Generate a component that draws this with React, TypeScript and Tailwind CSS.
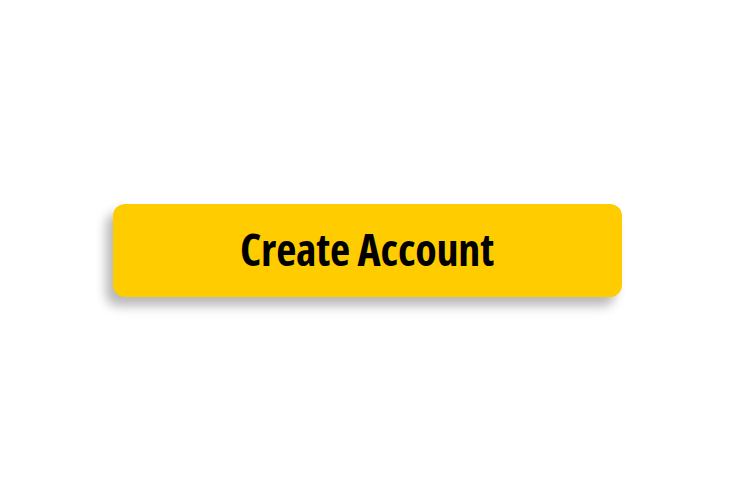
export default function App() {
  return (
    <div className="flex h-[500px] w-full items-center justify-center bg-white">
      <button
        type="button"
        className="flex h-[93px] w-[509px] items-center justify-center rounded-[12px] bg-[#ffcc00] pb-[2px] font-['Open_Sans',sans-serif] text-[44px] font-bold tracking-[-0.2px] text-black font-stretch-condensed shadow-[-7px_9px_11px_rgba(0,0,0,0.28)]"
      >
        Create Account
      </button>
    </div>
  )
}
